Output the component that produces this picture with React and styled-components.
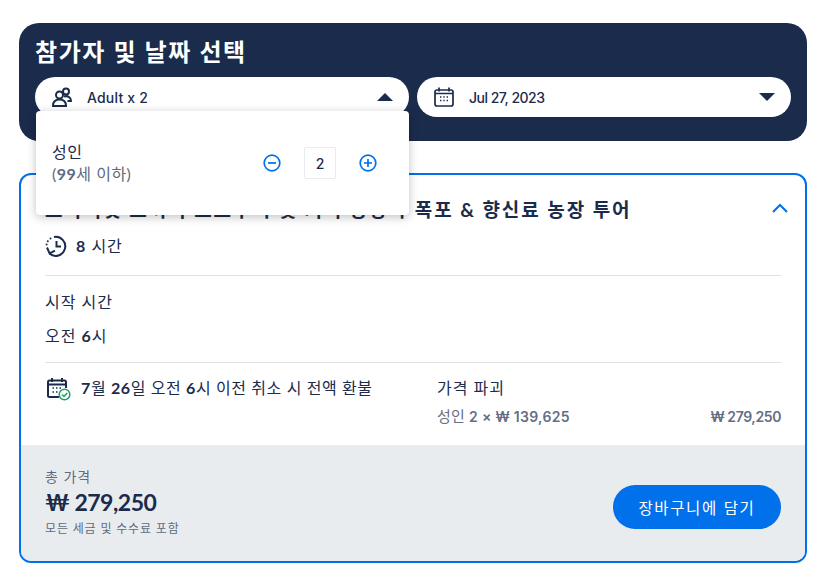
import styled, { createGlobalStyle } from "styled-components";

const latin = `Inter, "Noto Sans CJK KR", sans-serif`;
const bodyFont = `Lato, "Noto Sans CJK KR", sans-serif`;
const navy = "#1b2b4b";
const blue = "#0070eb";

const GlobalStyle = createGlobalStyle`
  html, body {
    margin: 0;
    background: #fff;
  }
  * {
    box-sizing: border-box;
  }
`;

const Page = styled.div`
  width: 836px;
  height: 584px;
  padding: 23px 29px 0 19px;
  font-family: ${bodyFont};
  color: ${navy};
  overflow: hidden;
`;

const Header = styled.div`
  position: relative;
  height: 118px;
  padding: 13px 16px 0;
  background: ${navy};
  border-radius: 20px;
`;

const Title = styled.h1`
  margin: 0 0 9px;
  height: 32px;
  font-size: 24px;
  line-height: 32px;
  font-weight: 700;
  letter-spacing: 1.6px;
  color: #fff;
`;

const Selects = styled.div`
  display: grid;
  grid-template-columns: 374px 374px;
  gap: 8px;
`;

const Select = styled.div`
  display: flex;
  align-items: center;
  height: 40px;
  padding: 0 16px 0 17px;
  background: #fff;
  border-radius: 20px;
  font-family: ${latin};
  font-size: 14px;
  font-weight: 500;
  letter-spacing: ${({ $spacing }) => $spacing}px;
  gap: 15px;
`;

const Caret = styled.span`
  margin-left: auto;
  width: 0;
  height: 0;
  border-left: 8px solid transparent;
  border-right: 8px solid transparent;
  border-${({ $up }) => ($up ? "bottom" : "top")}: 8px solid ${navy};
`;

const Popover = styled.div`
  position: absolute;
  z-index: 2;
  left: 17px;
  top: 88px;
  width: 373px;
  height: 104px;
  padding: 0 32px 0 16px;
  display: flex;
  align-items: center;
  justify-content: space-between;
  background: #fff;
  border-radius: 4px;
  box-shadow: 0 2px 10px rgba(0, 0, 0, 0.25);
`;

const PersonLabel = styled.div`
  font-size: 16px;
  line-height: 22px;
  letter-spacing: 0.5px;
`;

const PersonAge = styled.div`
  color: #5e6a80;
`;

const Num = styled.span`
  font-weight: 700;
`;

const Stepper = styled.div`
  display: flex;
  align-items: center;
  gap: 23px;
`;

const StepButton = styled.span`
  display: flex;
`;

const Count = styled.div`
  display: flex;
  align-items: center;
  justify-content: center;
  width: 32px;
  height: 32px;
  border: 1px solid #e9ecef;
  border-radius: 2px;
  font-family: ${latin};
  font-size: 14px;
  font-weight: 500;
`;

const Card = styled.div`
  position: relative;
  margin-top: 32px;
  height: 390px;
  border: 2px solid ${blue};
  border-radius: 12px;
  overflow: hidden;
  display: flex;
  flex-direction: column;
`;

const Body = styled.div`
  flex: 1;
  padding: 19px 24px 0;
`;

const TourHead = styled.div`
  display: flex;
  align-items: center;
  justify-content: space-between;
  height: 28px;
  margin-right: -8px;
  font-size: 19px;
  font-weight: 700;
  letter-spacing: 1.95px;
  white-space: nowrap;
`;

const Duration = styled.div`
  display: flex;
  align-items: center;
  gap: 8px;
  height: 24px;
  margin-top: 12px;
  font-size: 16px;
  letter-spacing: 1px;
`;

const DurationText = styled.span`
  margin-top: -2px;
`;

const Divider = styled.div`
  height: 1px;
  margin: ${({ $top }) => $top}px 0 ${({ $bottom }) => $bottom}px;
  background: #dfe1e8;
`;

const Line = styled.div`
  height: 23px;
  font-size: 16px;
  line-height: 21px;
  letter-spacing: 1px;
  margin-bottom: ${({ $gap }) => $gap || 0}px;
`;

const Columns = styled.div`
  display: grid;
  grid-template-columns: 392px 1fr;
`;

const Refund = styled.div`
  display: flex;
  align-items: flex-start;
  gap: 10px;
  padding-left: 2px;
  font-size: 16px;
  line-height: 21px;
  letter-spacing: 0.6px;
  white-space: nowrap;
`;

const Breakdown = styled.div`
  display: flex;
  flex-direction: column;
  gap: 6px;
`;

const PriceRow = styled.div`
  display: flex;
  justify-content: space-between;
  font-family: ${latin};
  font-size: 14px;
  line-height: 21px;
  font-weight: 600;
  letter-spacing: -0.4px;
  color: #646e84;
`;

const PriceName = styled.span`
  letter-spacing: 0.3px;
`;

const PriceLabel = styled.span`
  font-family: ${bodyFont};
  font-size: 15px;
  font-weight: 400;
`;

const Footer = styled.div`
  display: flex;
  align-items: center;
  justify-content: space-between;
  height: 116px;
  padding: 0 24px;
  background: #e9ecef;
`;

const TotalLabel = styled.div`
  font-size: 14px;
  line-height: 17px;
  letter-spacing: 1px;
  color: #5e6a80;
`;

const TotalPrice = styled.div`
  font-size: 23px;
  line-height: 34px;
  font-weight: 700;
  letter-spacing: -0.5px;
`;

const TotalNote = styled.div`
  font-size: 12px;
  line-height: 19px;
  letter-spacing: 0.85px;
  color: #5e6a80;
`;

const CartButton = styled.button`
  width: 168px;
  height: 44px;
  margin-top: 8px;
  border: 0;
  border-radius: 22px;
  background: ${blue};
  color: #fff;
  font-family: ${latin};
  font-size: 15.5px;
  font-weight: 400;
  letter-spacing: 1.6px;
`;

const UsersIcon = () => (
  <svg width="20" height="20" viewBox="0 0 20 20" fill="none" stroke={navy} strokeWidth="2">
    <circle cx="7.500" cy="8" r="3.500" />
    <circle cx="14" cy="4.500" r="3" />
    <path d="M1 19c0-4.500 2.500-6.500 6.500-6.500s6.500 2 6.500 6.500zM12 9.500c3.500-1.200 7 .8 7 4.500h-3.500" />
  </svg>
);

const CalendarIcon = () => (
  <svg width="20" height="20" viewBox="0 0 20 20" fill="none" stroke={navy} strokeWidth="1.7">
    <rect x="1" y="3" width="18" height="16" rx="2" />
    <path d="M5 0.500v4M15 0.500v4M1 6.500h18" />
    <path d="M6 10h1.400M9.300 10h1.400M12.600 10h1.400M6 13.500h1.400M9.300 13.500h1.400M12.600 13.500h1.400" strokeWidth="1.400" />
  </svg>
);

const HistoryIcon = () => (
  <svg width="23" height="22" viewBox="0 0 23 22" fill="none" stroke={navy} strokeWidth="2">
    <path d="M9 2a9.500 9.500 0 1 1-4.500 16.500" />
    <path d="M2 12.500l2.600 5.800 5.400-2.600" />
    <path d="M11.500 6v5.500h4.500" />
    <path d="M5.500 3.500v.01M2.800 6.300v.01M1.600 9.500v.01" strokeLinecap="round" />
  </svg>
);

const RefundIcon = () => (
  <svg width="24" height="24" viewBox="0 0 24 24" fill="none">
    <g stroke={navy} strokeWidth="2">
      <path d="M12 20H2.500A1.500 1.500 0 0 1 1 18.500V5a1.500 1.500 0 0 1 1.500-1.500h15A1.500 1.500 0 0 1 19 5v6" />
      <path d="M5 1v4M15 1v4M1 7.500h18" />
      <path d="M5.500 11H7M9 11h1.500M12.500 11H14M5.500 15H7M9 15h1.500" strokeWidth="1.300" />
    </g>
    <circle cx="17.500" cy="17.500" r="5.300" fill="#fff" stroke="#1f9d6b" strokeWidth="1.500" />
    <path d="M15 17.500l2 2 3.200-3.600" stroke="#1f9d6b" strokeWidth="1.500" />
  </svg>
);

const RoundStep = ({ plus }) => (
  <StepButton>
    <svg width="18" height="18" viewBox="0 0 18 18" fill="none" stroke={blue} strokeWidth="1.700">
      <circle cx="9" cy="9" r="7.800" />
      <path d={plus ? "M5 9h8M9 5v8" : "M5 9h8"} />
    </svg>
  </StepButton>
);

const Chevron = () => (
  <svg width="18" height="12" viewBox="0 0 18 12" fill="none" stroke={blue} strokeWidth="2">
    <path d="M2 10l7-7 7 7" />
  </svg>
);

const App = () => (
  <Page>
    <GlobalStyle />
    <Header>
      <Title>참가자 및 날짜 선택</Title>
      <Selects>
        <Select $spacing={0.2}>
          <UsersIcon />
          Adult x 2
          <Caret $up />
        </Select>
        <Select $spacing={-0.5}>
          <CalendarIcon />
          Jul 27, 2023
          <Caret />
        </Select>
      </Selects>
      <Popover>
        <PersonLabel>
          성인
          <PersonAge>(<Num>99</Num>세 이하)</PersonAge>
        </PersonLabel>
        <Stepper>
          <RoundStep />
          <Count>2</Count>
          <RoundStep plus />
        </Stepper>
      </Popover>
    </Header>
    <Card>
      <Body>
        <TourHead>
          <span>프라이빗 코끼리 보호구역 및 커피 농장과 폭포 & 향신료 농장 투어</span>
          <Chevron />
        </TourHead>
        <Duration>
          <HistoryIcon />
          <DurationText><Num>8</Num> 시간</DurationText>
        </Duration>
        <Divider $top={17} $bottom={15} />
        <Line $gap={11}>시작 시간</Line>
        <Line>오전 <Num>6</Num>시</Line>
        <Divider $top={14} $bottom={14} />
        <Columns>
          <Refund>
            <RefundIcon />
            <span><Num>7</Num>월 <Num>26</Num>일 오전 <Num>6</Num>시 이전 취소 시 전액 환불</span>
          </Refund>
          <Breakdown>
            <Line>가격 파괴</Line>
            <PriceRow>
              <PriceName><PriceLabel>성인</PriceLabel> 2 × ₩ 139,625</PriceName>
              <span>₩ 279,250</span>
            </PriceRow>
          </Breakdown>
        </Columns>
      </Body>
      <Footer>
        <div>
          <TotalLabel>총 가격</TotalLabel>
          <TotalPrice>₩ 279,250</TotalPrice>
          <TotalNote>모든 세금 및 수수료 포함</TotalNote>
        </div>
        <CartButton>장바구니에 담기</CartButton>
      </Footer>
    </Card>
  </Page>
);

export default App;
